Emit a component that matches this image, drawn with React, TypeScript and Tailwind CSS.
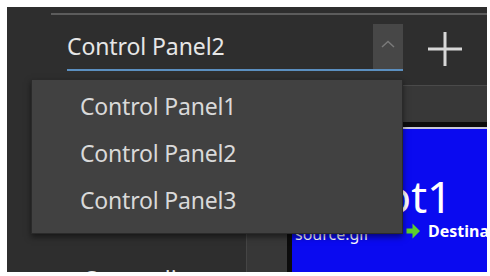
import React from "react";

const font = { fontFamily: '"Noto Sans", "Open Sans", sans-serif' };

export default function App() {
  return (
    <div className="w-[490px] h-[276px] bg-white pt-[7px] pl-[7px] pr-[3px] pb-[4px]" style={font}>
      <div className="relative h-full bg-[#2e2e2e] overflow-hidden flex flex-col">
        {/* top line */}
        <div className="ml-[44px] mt-[6px] h-[2px] bg-[#5c5c5c] shrink-0" />
        {/* header */}
        <div className="flex h-[71px] shrink-0">
          <div className="ml-[60px] w-[336px] shrink-0 mt-[9px] h-[47px] flex border-b-2 border-[#5b8fc0]">
            <div className="flex-1 min-w-0 pt-[9px] text-[23px] leading-[26px] text-[#e6e6e6] tracking-[-0.1px] whitespace-nowrap">Control Panel2</div>
            <div className="w-[30px] shrink-0 bg-[#474747] flex justify-center pt-[16px]">
              <svg width="14" height="8" viewBox="0 0 14 8">
                <path d="M1 7 L7 1.5 L13 7" fill="none" stroke="#7a7a7a" strokeWidth="1.5" />
              </svg>
            </div>
          </div>
          <div className="flex-1 min-w-0 border-b border-[#4a4a4a] flex justify-center pt-[16px]">
            <svg width="36" height="36" viewBox="0 0 36 36">
              <path d="M18 1 V35 M1 18 H35" stroke="#d8d8d8" strokeWidth="3" />
            </svg>
          </div>
        </div>
        {/* body */}
        <div className="flex flex-1 min-h-0">
          <div className="w-[239px] shrink-0 flex flex-col justify-end">
            <div className="ml-[78px] -mb-[20px] text-[23px] leading-[26px] text-[#e6e6e6] whitespace-nowrap">Source list</div>
          </div>
          <div className="w-[41px] shrink-0 bg-[#373737] border-l border-[#454545]" />
          <div className="flex-1 min-w-0 flex flex-col">
            <div className="h-[36px] shrink-0 bg-[#383838]" />
            <div className="h-[5px] shrink-0 bg-[#0c0c0c]" />
            <div className="flex-1 min-h-0 flex border-t-2 border-[#c8c8d8]">
              <div className="w-[5px] shrink-0 bg-[#0c0c0c]" />
              <div className="flex-1 min-w-0 bg-[#0a0af0] pl-[10px] pt-[42px] text-white overflow-hidden">
                <div className="pl-[47px] text-[44px] leading-[50px] whitespace-nowrap">Slot1</div>
                <div className="flex h-[18px] items-center gap-[4px] text-[16px] leading-[18px] font-bold whitespace-nowrap -ml-[7px] mt-[1px]">
                  <span className="w-[106px] shrink-0 self-end leading-[12px] font-normal">source.gif</span>
                  <svg width="16" height="18" viewBox="0 0 16 18" className="shrink-0">
                    <path d="M1.5 6.5 H7.5 V1.5 L15 9 L7.5 16.5 V11.5 H1.5 Z" fill="#5ccf2e" />
                  </svg>
                  <span className="ml-[3px]">Destination</span>
                </div>
              </div>
            </div>
          </div>
        </div>

        {/* dropdown menu */}
        <div className="absolute left-[24px] top-[72px] w-[372px] h-[155px] bg-[#414141] border border-[#2a2a2a] shadow-[0_3px_6px_rgba(0,0,0,0.5)] pt-[13px] pl-[48px] flex flex-col">
          {["Control Panel1", "Control Panel2", "Control Panel3"].map((t) => (
            <div key={t} className="h-[47px] shrink-0 text-[23px] leading-[26px] text-[#d9d9d9] tracking-[-0.2px] whitespace-nowrap">
              {t}
            </div>
          ))}
        </div>
      </div>
    </div>
  );
}
